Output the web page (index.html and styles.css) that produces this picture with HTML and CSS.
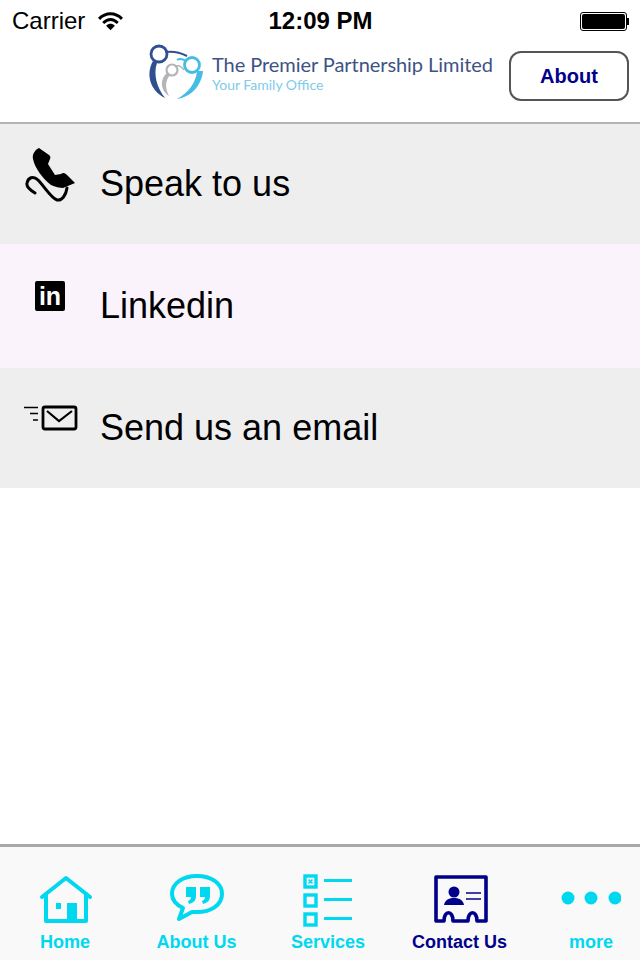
FILE: index.html
```html
<!DOCTYPE html>
<html lang="en">
<head>
    <meta charset="UTF-8">
    <title>The Premier Partnership Limited</title>
    <link rel="stylesheet" href="styles.css">
</head>
<body>
    <div class="status-bar">
        <div class="status-left">
            <span>Carrier</span>
            <svg class="wifi" width="25" height="19" viewBox="0 0 24 18">
                <path d="M1 6.5C7.5 0 16.5 0 23 6.5M5 10.5C9.5 6.2 14.5 6.2 19 10.5" fill="none" stroke="#000" stroke-width="2.8"/>
                <path d="M7.8 13C10.5 10.6 13.5 10.6 16.2 13L12 17.5Z" fill="#000"/>
            </svg>
        </div>
        <div class="status-time">12:09 PM</div>
        <div class="battery">
            <div class="battery-shell"><div class="battery-fill"></div></div>
            <div class="battery-tip"></div>
        </div>
    </div>

    <header class="header">
        <div class="logo">
            <svg class="logo-mark" width="60" height="60" viewBox="0 0 60 60">
                <g fill="none">
                    <circle cx="13" cy="12" r="8" stroke="#2f4f8f" stroke-width="2.8"/>
                    <path d="M20 10C27 9 35 11 41 14" stroke="#2f4f8f" stroke-width="2"/>
                    <path d="M7 19C0 31 3 48 19 56C11 46 7 32 11 21Z" fill="#2f4f8f"/>
                    <circle cx="26" cy="28" r="5.5" stroke="#b3b5b8" stroke-width="2.2"/>
                    <path d="M30 24C33 23 36 25 38 28" stroke="#b3b5b8" stroke-width="1.6"/>
                    <path d="M21 31C13 38 15 49 23 54C19 46 19 39 24 33Z" fill="#b3b5b8"/>
                    <circle cx="46" cy="23" r="7.5" stroke="#45bde3" stroke-width="2.8"/>
                    <path d="M31 18C34 16 37 17 40 19" stroke="#45bde3" stroke-width="2"/>
                    <path d="M57 29C56 42 46 55 31 57C42 51 50 41 51 29Z" fill="#45bde3"/>
                </g>
            </svg>
            <div class="logo-text">
                <div class="logo-name">The Premier Partnership Limited</div>
                <div class="logo-sub">Your Family Office</div>
            </div>
        </div>
        <button class="about-button">About</button>
    </header>

    <main class="contact-list">
        <div class="contact-row row-grey">
            <div class="row-icon">
                <svg class="icon-phone" width="50" height="54" viewBox="0 0 50 54">
                    <path d="M14 0C10 2 7 6 8 11C10 20 17 30 26 37C30 39 35 40 38 40L50 35L42 27C40 25 38 24 36 26L30 27L23 16L25 11C26 9 25 8 24 7Z"/>
                    <path d="M10 45C5 42 1 39 2 35C3 30 8 27 13 32C19 38 26 50 32 52C37 53 41 47 42 40" fill="none" stroke="#000" stroke-width="3" stroke-linecap="round"/>
                </svg>
            </div>
            <span>Speak to us</span>
        </div>
        <div class="contact-row row-pink">
            <div class="row-icon">
                <div class="icon-linkedin">in</div>
            </div>
            <span>Linkedin</span>
        </div>
        <div class="contact-row row-grey">
            <div class="row-icon">
                <svg class="icon-email" width="54" height="26" viewBox="0 0 54 26">
                    <rect x="19" y="2" width="33" height="22" rx="2" fill="none" stroke="#000" stroke-width="2.8"/>
                    <path d="M23 6L35 16L48 6" fill="none" stroke="#000" stroke-width="2.2"/>
                    <path d="M0 2.5H14M6 8.5H14M9 15H14" fill="none" stroke="#000" stroke-width="1.6"/>
                </svg>
            </div>
            <span>Send us an email</span>
        </div>
    </main>

    <nav class="tab-bar">
        <div class="tab">
            <svg width="60" height="56" viewBox="0 0 60 56">
                <g fill="none" stroke="currentColor" stroke-width="4" stroke-linecap="round" stroke-linejoin="round">
                    <path d="M7 25L31 6L55 25"/>
                    <path d="M11 22V49H51V22"/>
                </g>
                <path d="M32 31H42V49H32ZM21 31H26V37H21Z" fill="currentColor"/>
            </svg>
            <span>Home</span>
        </div>
        <div class="tab">
            <svg width="60" height="56" viewBox="0 0 60 56">
                <path d="M16 36C8 32 5 27 5 22C5 11 16 4 30 4C44 4 55 11 55 22C55 33 44 40 30 40C28 40 26 40 25 40L12 47Z" fill="none" stroke="currentColor" stroke-width="4" stroke-linecap="round" stroke-linejoin="round"/>
                <path d="M19 15H29V24C29 29 26 31 22 32L21 29C23 28 24 27 24 25H19ZM33 15H43V24C43 29 40 31 36 32L35 29C37 28 38 27 38 25H33Z" fill="currentColor"/>
            </svg>
            <span>About Us</span>
        </div>
        <div class="tab">
            <svg width="60" height="56" viewBox="0 0 60 56">
                <g fill="none" stroke="currentColor">
                    <rect x="7" y="4" width="11" height="11" stroke-width="3.4"/>
                    <rect x="7" y="23" width="11" height="11" stroke-width="3.4"/>
                    <rect x="7" y="42" width="11" height="11" stroke-width="3.4"/>
                    <path d="M10.5 7.5L14.5 11.5M14.5 7.5L10.5 11.5" stroke-width="1.6"/>
                    <path d="M26 8.5H54M26 27.5H54M26 46.5H54" stroke-width="3"/>
                </g>
            </svg>
            <span>Services</span>
        </div>
        <div class="tab tab-active">
            <svg width="60" height="56" viewBox="0 0 60 56">
                <path d="M6 5H56V49H47C47 38 38 38 38 49H23C23 38 14 38 14 49H6Z" fill="none" stroke="currentColor" stroke-width="3.6" stroke-linejoin="round"/>
                <circle cx="24" cy="20" r="5.5" fill="currentColor"/>
                <path d="M14 33C15 27 20 26 24 26C28 26 33 27 34 33Z" fill="currentColor"/>
                <path d="M36 21H51M36 27H51" stroke="currentColor" stroke-width="1.6"/>
            </svg>
            <span>Contact Us</span>
        </div>
        <div class="tab">
            <svg width="60" height="56" viewBox="0 0 60 56">
                <circle cx="7" cy="26" r="6.5" fill="currentColor"/>
                <circle cx="30" cy="26" r="6.5" fill="currentColor"/>
                <circle cx="54" cy="26" r="6.5" fill="currentColor"/>
            </svg>
            <span>more</span>
        </div>
    </nav>
</body>
</html>
```

FILE: styles.css
```css
* {
    margin: 0;
    padding: 0;
    box-sizing: border-box;
}

body {
    width: 640px;
    height: 960px;
    overflow: hidden;
    display: flex;
    flex-direction: column;
    background: #fff;
    color: #000;
    font-family: "Liberation Sans", Arial, sans-serif;
}

.status-bar {
    height: 40px;
    display: grid;
    grid-template-columns: 1fr auto 1fr;
    align-items: center;
    padding: 2px 11px 0 12px;
    font-size: 24px;
}

.status-left {
    display: flex;
    align-items: center;
    gap: 13px;
}

.status-time {
    font-weight: bold;
}

.battery {
    justify-self: end;
    display: flex;
    align-items: center;
}

.battery-shell {
    width: 47px;
    height: 19px;
    padding: 1px;
    border: 1px solid #000;
    border-radius: 3px;
}

.battery-fill {
    height: 100%;
    background: #000;
    border-radius: 2px;
}

.battery-tip {
    width: 2px;
    height: 7px;
    background: #000;
}

.header {
    height: 84px;
    display: flex;
    align-items: flex-start;
    justify-content: space-between;
    padding: 11px 11px 0 146px;
    border-bottom: 2px solid #b4b4b4;
}

.logo {
    display: flex;
    margin-top: -9px;
}

.logo-mark {
    margin-right: 6px;
}

.logo-text {
    padding-top: 10px;
}

.logo-name {
    font-family: Lato, sans-serif;
    font-size: 20px;
    letter-spacing: -0.06px;
    line-height: 25px;
    color: #3d5285;
    white-space: nowrap;
}

.logo-sub {
    font-family: Lato, sans-serif;
    font-size: 14px;
    line-height: 16px;
    color: #7fcbe8;
}

.about-button {
    width: 120px;
    height: 50px;
    background: #fff;
    border: 2px solid #555;
    border-radius: 12px;
    color: #00008b;
    font-family: "Liberation Sans", Arial, sans-serif;
    font-size: 20px;
    font-weight: bold;
}

.contact-list {
    flex: 1;
}

.contact-row {
    display: flex;
    align-items: center;
    font-size: 36px;
    height: 120px;
}

.row-grey {
    background: #eeeeee;
}

.row-pink {
    height: 124px;
    background: #faf3fb;
}

.row-icon {
    width: 100px;
    align-self: stretch;
}

.icon-phone {
    display: block;
    margin: 24px 0 0 25px;
}

.icon-linkedin {
    width: 30px;
    height: 30px;
    margin: 37px 0 0 35px;
    background: #000;
    border-radius: 2px;
    color: #fff;
    font-size: 25px;
    font-weight: bold;
    line-height: 30px;
    text-align: center;
}

.icon-email {
    display: block;
    margin: 37px 0 0 24px;
}

.tab-bar {
    height: 116px;
    display: flex;
    gap: 31.5px;
    padding: 25px 0 0 15px;
    border-top: 3px solid #a8a8a8;
    background: #f9f9f9;
    color: #00d8f0;
}

.tab {
    flex: 0 0 100px;
    display: flex;
    flex-direction: column;
    align-items: center;
    font-size: 18px;
    font-weight: bold;
    white-space: nowrap;
}

.tab span {
    margin-top: 3px;
    line-height: 22px;
}

.tab-active {
    color: #00008b;
}
```
